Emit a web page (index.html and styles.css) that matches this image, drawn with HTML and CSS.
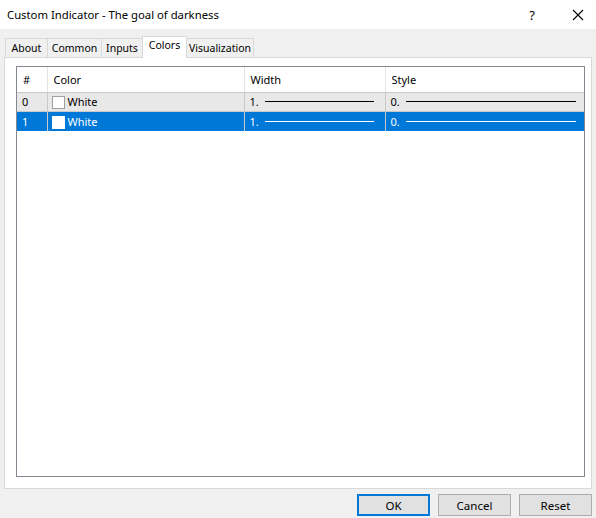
FILE: index.html
```html
<!DOCTYPE html>
<html lang="en">
<head>
  <meta charset="UTF-8">
  <title>Custom Indicator - The goal of darkness</title>
  <link rel="stylesheet" href="styles.css">
</head>
<body>
  <div class="dialog">
    <div class="titlebar">
      <span class="title">Custom Indicator - The goal of darkness</span>
      <span class="help">?</span>
      <svg class="close" width="12" height="12" viewBox="0 0 12 12">
        <path d="M1 1 L11 11 M11 1 L1 11" stroke="#000" stroke-width="1.1" fill="none"/>
      </svg>
    </div>

    <div class="tabs">
      <div class="tab t-about">About</div>
      <div class="tab t-common">Common</div>
      <div class="tab t-inputs">Inputs</div>
      <div class="tab t-colors active">Colors</div>
      <div class="tab t-vis">Visualization</div>
    </div>

    <div class="panel">
      <div class="grid">
        <table>
          <colgroup>
            <col class="c-num">
            <col class="c-color">
            <col class="c-width">
            <col class="c-style">
          </colgroup>
          <thead>
            <tr>
              <th>#</th>
              <th>Color</th>
              <th>Width</th>
              <th>Style</th>
            </tr>
          </thead>
          <tbody>
            <tr class="row">
              <td>0</td>
              <td class="color-cell"><span class="swatch"></span>White</td>
              <td><div class="line-cell width-line">1.<span class="line"></span></div></td>
              <td><div class="line-cell style-line">0.<span class="line"></span></div></td>
            </tr>
            <tr class="row selected">
              <td>1</td>
              <td class="color-cell"><span class="swatch"></span>White</td>
              <td><div class="line-cell width-line">1.<span class="line"></span></div></td>
              <td><div class="line-cell style-line">0.<span class="line"></span></div></td>
            </tr>
          </tbody>
        </table>
      </div>
    </div>

    <div class="actions">
      <button class="default">OK</button>
      <button>Cancel</button>
      <button>Reset</button>
    </div>
  </div>
</body>
</html>
```

FILE: styles.css
```css
* {
  box-sizing: border-box;
}

body {
  margin: 0;
  background: #f0f0f0;
  font-family: 'Noto Sans', 'Liberation Sans', sans-serif;
  font-size: 11px;
  color: #000;
}

.dialog {
  width: 596px;
  height: 518px;
}

.titlebar {
  height: 29px;
  background: #fff;
  display: flex;
  align-items: center;
  padding-left: 7px;
}

.title {
  flex: 1;
  font-size: 11.3px;
}

.help {
  font-size: 13px;
  margin-right: 37px;
}

.close {
  margin-right: 12px;
}

.tabs {
  display: flex;
  align-items: flex-end;
  height: 28px;
  padding-left: 5px;
  position: relative;
  z-index: 1;
}

.tab {
  height: 19px;
  text-align: center;
  line-height: 18px;
  font-size: 10.5px;
  background: #f0f0f0;
  border: 1px solid #d9d9d9;
  border-bottom: none;
  margin-right: -1px;
}

.t-about { width: 43px; }
.t-common { width: 55px; }
.t-inputs { width: 42px; }
.t-colors { width: 45px; }
.t-vis { width: 68px; }

.tab.active {
  height: 22px;
  background: #fff;
  margin-bottom: -1px;
  line-height: 17px;
  padding-bottom: 3px;
  position: relative;
  z-index: 2;
}

.panel {
  margin: 0 4px;
  height: 432px;
  background: #fff;
  border: 1px solid #d9d9d9;
  padding: 8px 6px 11px 11px;
}

.grid {
  height: 100%;
  border: 1px solid #828790;
  background: #fff;
}

table {
  width: 100%;
  border-collapse: collapse;
  table-layout: fixed;
}

.c-num { width: 30px; }
.c-color { width: 197px; }
.c-width { width: 141px; }

th {
  height: 25px;
  text-align: left;
  font-weight: normal;
  padding: 0 6px;
  border-left: 1px solid #e5e5e5;
  border-bottom: 1px solid #c9c9c9;
}

th:first-child {
  border-left: none;
}

td {
  height: 19px;
  padding: 0 5px;
  border-left: 1px solid #c9c9c9;
  border-bottom: 1px solid #c9c9c9;
  white-space: nowrap;
}

td:first-child {
  border-left: none;
}

td.color-cell {
  padding-left: 4px;
}

.row {
  background: #e8e8e8;
}

.row.selected {
  background: #0078d7;
  color: #fff;
}

.row.selected td {
  height: 20px;
  border-bottom: none;
}

.swatch {
  display: inline-block;
  width: 13px;
  height: 13px;
  background: #fff;
  border: 1px solid #a0a0a0;
  vertical-align: -3px;
  margin-right: 3px;
}

.row.selected .swatch {
  border-color: #fff;
}

.line-cell {
  display: flex;
  align-items: center;
}

.line {
  flex: 1;
  height: 1px;
  background: #000;
  margin-left: 6px;
}

.width-line .line {
  margin-right: 6px;
}

.style-line .line {
  margin-right: 3px;
}

.row.selected .line {
  background: #fff;
}

.actions {
  display: flex;
  justify-content: flex-end;
  gap: 8px;
  padding: 5px 4px 0 0;
}

button {
  width: 73px;
  height: 22px;
  font-family: inherit;
  font-size: 11.5px;
  background: #e1e1e1;
  border: 1px solid #adadad;
  padding: 0;
  color: #000;
}

button.default {
  border: 2px solid #0078d7;
}
```
